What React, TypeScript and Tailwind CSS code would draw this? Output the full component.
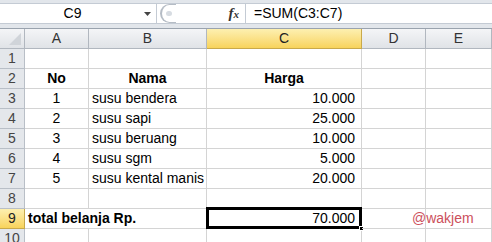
import React from 'react';

const cols = ['A', 'B', 'C', 'D', 'E'];

interface Row {
  n: number;
  a?: string;
  b?: string;
  c?: string;
  bold?: boolean;
}

const rows: Row[] = [
  { n: 1 },
  { n: 2, a: 'No', b: 'Nama', c: 'Harga', bold: true },
  { n: 3, a: '1', b: 'susu bendera', c: '10.000' },
  { n: 4, a: '2', b: 'susu sapi', c: '25.000' },
  { n: 5, a: '3', b: 'susu beruang', c: '10.000' },
  { n: 6, a: '4', b: 'susu sgm', c: '5.000' },
  { n: 7, a: '5', b: 'susu kental manis', c: '20.000' },
  { n: 8 },
  { n: 9 },
  { n: 10 },
];

const cell = 'border-r border-b border-[#d4d4d4] h-[20px] flex items-center text-[14px] text-black whitespace-nowrap';

const FormulaBar: React.FC = () => (
  <div className="h-[29px] bg-[#e2e6eb] border-b border-[#9aa3ae] pt-[3px] flex">
    <div className="w-[157px] h-[21px] bg-white border-t border-b border-r border-[#c4cbd4] flex items-center">
      <div className="flex-1 text-center text-[14px] text-black pl-[4px]">C9</div>
      <svg width="14" height="8" viewBox="0 0 14 8" className="mr-[1px]">
        <path d="M3 2 L10 2 L6.5 6 Z" fill="#444" />
      </svg>
    </div>
    <div className="w-[88px] h-[21px] bg-white border-t border-b border-[#c4cbd4] flex items-center">
      <div className="ml-[3px] w-[16px] h-[19px] rounded-l-full border-l-2 border-t border-b border-[#b5bcc5] flex items-center justify-start pl-[4px]">
        <div className="w-[6px] h-[5px] rounded-full bg-[#d7dce2]" />
      </div>
      <div className="flex-1" />
      <div className="mr-[6px] text-[15px] text-[#333] italic font-bold leading-none" style={{ fontFamily: '"Liberation Serif", serif' }}>
        f<span className="text-[11px]">x</span>
      </div>
    </div>
    <div className="flex-1 h-[21px] bg-white border-t border-b border-l border-[#c4cbd4] flex items-center pl-[8px] text-[14px] text-black">
      =SUM(C3:C7)
    </div>
  </div>
);

const App: React.FC = () => {
  return (
    <div className="w-[492px] h-[242px] overflow-hidden bg-white relative" style={{ fontFamily: '"Liberation Sans", Arial, sans-serif' }}>
      <FormulaBar />
      <div className="grid grid-cols-[25px_64px_118px_155px_64px_1fr]">
        <div className="h-[20px] border-r border-b border-[#b1b7bf] bg-gradient-to-b from-[#f4f5f7] to-[#e0e3e7] relative">
          <svg width="12" height="12" viewBox="0 0 12 12" className="absolute right-[3px] bottom-[3px]">
            <path d="M12 0 L12 12 L0 12 Z" fill="#d0d4d9" />
          </svg>
        </div>
        {cols.map((c) => (
          <div
            key={c}
            className={`h-[20px] border-r border-b flex items-center justify-center text-[14px] ${
              c === 'C'
                ? 'bg-gradient-to-b from-[#fdf0b0] to-[#f8d35a] border-[#c9a94a] text-[#222]'
                : 'bg-gradient-to-b from-[#f4f5f7] to-[#e0e3e7] border-[#b1b7bf] text-[#333]'
            }`}
          >
            {c}
          </div>
        ))}
        {rows.map((r) => (
          <React.Fragment key={r.n}>
            <div
              className={`h-[20px] border-r border-b flex items-center justify-center text-[14px] ${
                r.n === 9
                  ? 'bg-gradient-to-b from-[#fdf0b0] to-[#f8d35a] border-[#c9a94a] text-[#222]'
                  : 'bg-[#e4e7eb] border-[#b9bfc7] text-[#444]'
              }`}
            >
              {r.n}
            </div>
            {r.n === 9 ? (
              <>
                <div className={`${cell} border-r-0 font-bold text-[13px] pl-[3px] overflow-visible`}>total belanja Rp.</div>
                <div className={`${cell}`} />
                <div className={`${cell} justify-end pr-[6px] relative`}>
                  70.000
                  <div className="absolute -left-[1px] -top-[2px] -right-[1px] -bottom-[1px] border-[3px] border-black" />
                  <div className="absolute -right-[3px] -bottom-[3px] w-[5px] h-[5px] bg-black border border-white" />
                </div>
                <div className={`${cell} relative`}>
                  <span className="absolute left-[50px] text-[14px] text-[#cc4f5b]">@wakjem</span>
                </div>
                <div className={cell} />
              </>
            ) : (
              <>
                <div className={`${cell} justify-center ${r.bold ? 'font-bold text-[13px]' : ''}`}>{r.a}</div>
                <div className={`${cell} ${r.bold ? 'justify-center font-bold text-[13px]' : 'pl-[3px]'}`}>{r.b}</div>
                <div className={`${cell} ${r.bold ? 'justify-center font-bold text-[13px]' : 'justify-end pr-[6px]'}`}>{r.c}</div>
                <div className={cell} />
                <div className={cell} />
              </>
            )}
          </React.Fragment>
        ))}
      </div>
    </div>
  );
};

export default App;
